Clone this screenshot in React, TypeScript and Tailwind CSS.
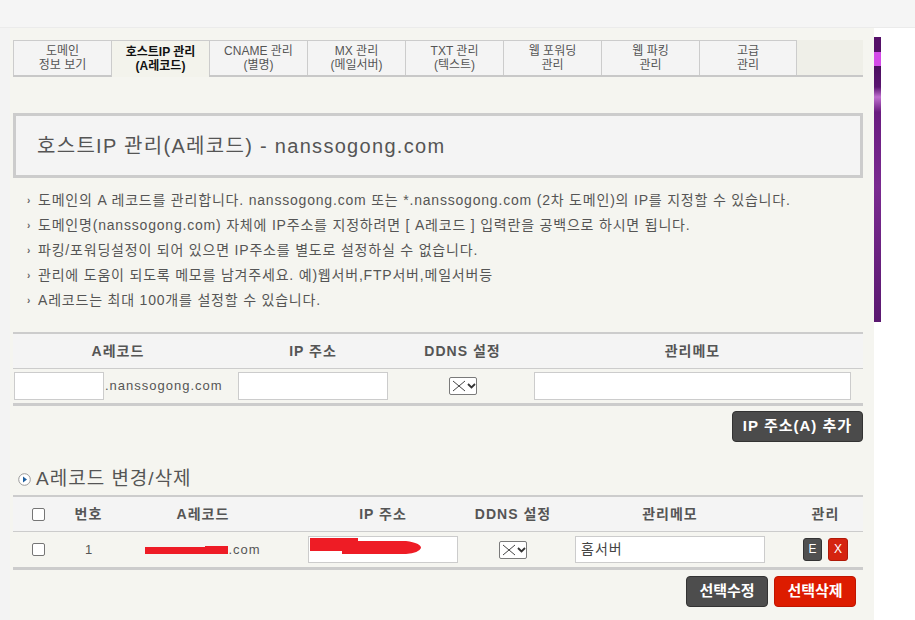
const tabs = [
  ['도메인', '정보 보기'],
  ['호스트IP 관리', '(A레코드)'],
  ['CNAME 관리', '(별명)'],
  ['MX 관리', '(메일서버)'],
  ['TXT 관리', '(텍스트)'],
  ['웹 포워딩', '관리'],
  ['웹 파킹', '관리'],
  ['고급', '관리'],
];

const notes = [
  '도메인의 A 레코드를 관리합니다. nanssogong.com 또는 *.nanssogong.com (2차 도메인)의 IP를 지정할 수 있습니다.',
  '도메인명(nanssogong.com) 자체에 IP주소를 지정하려면 [ A레코드 ] 입력란을 공백으로 하시면 됩니다.',
  '파킹/포워딩설정이 되어 있으면 IP주소를 별도로 설정하실 수 없습니다.',
  '관리에 도움이 되도록 메모를 남겨주세요. 예)웹서버,FTP서버,메일서버등',
  'A레코드는 최대 100개를 설정할 수 있습니다.',
];

function DdnsSelect() {
  return (
    <div className="inline-flex items-center w-[28px] h-[18px] border border-[#7a7a7a] rounded-[2px] bg-white pl-[2px]">
      <svg width="14" height="12" viewBox="0 0 14 12">
        <path d="M1 1 L13 11 M13 1 L1 11" stroke="#444" strokeWidth="1" fill="none" />
      </svg>
      <svg width="9" height="6" viewBox="0 0 9 6" className="ml-[1px]">
        <path d="M1 1 L4.5 4.5 L8 1" stroke="#333" strokeWidth="1.8" fill="none" />
      </svg>
    </div>
  );
}

function Check() {
  return <span className="inline-block w-[13px] h-[13px] border border-[#767676] rounded-[2px] bg-white" />;
}

export default function App() {
  return (
    <div className="w-[915px] h-[620px] overflow-hidden bg-white text-[#555] font-['Liberation_Sans','Noto_Sans_CJK_KR',sans-serif]">
      {/* top bar */}
      <div className="h-[28px] bg-[#f5f5f5] border-b border-[#ebebeb]" />

      <div className="flex h-[592px]">
        <div className="w-[10px] bg-[#f3f3f3]" />

        <div className="w-[864px] bg-[#f5f5f0] pl-[3px] pr-[11px] pt-[12px]">
          {/* tabs */}
          <div className="flex h-[37px] bg-[#efefe8] border-b-2 border-[#c8c8c8]">
            {tabs.map(([a, b], i) => (
              <div
                key={a}
                className={`w-[98px] flex flex-col justify-center items-center text-[12px] leading-[14px] border-t border-l border-[#cccccc] ${
                  i === 7 ? 'border-r' : ''
                } ${
                  i === 1
                    ? 'bg-[#f3f3ec] h-[37px] mb-[-2px] font-bold text-[#111]'
                    : 'bg-[#f4f4f4] text-[#555]'
                }`}
              >
                <span>{a}</span>
                <span>{b}</span>
              </div>
            ))}
          </div>

          {/* title */}
          <div className="mt-[36px] h-[65px] border-[3px] border-[#cccccc] bg-[#f4f4f4] flex items-center pl-[21px] text-[20px] tracking-[1.3px] text-[#555]">
            호스트IP 관리(A레코드) - nanssogong.com
          </div>

          {/* notes */}
          <ul className="mt-[10px] pl-[14px] text-[14px] tracking-[0.8px] leading-[25px] text-[#555]">
            {notes.map((n) => (
              <li key={n} className="flex items-center">
                <span className="w-[11px] text-[10px] text-[#666] font-bold">›</span>
                <span>{n}</span>
              </li>
            ))}
          </ul>

          {/* add form */}
          <div className="mt-[19px] border-t-2 border-b-[3px] border-[#cccccc]">
            <div className="grid grid-cols-[210px_180px_119px_341px] h-[35px] bg-[#f4f4f4] border-b border-[#cccccc] items-center text-center text-[14px] tracking-[1px] font-bold text-[#555]">
              <span>A레코드</span>
              <span>IP 주소</span>
              <span>DDNS 설정</span>
              <span>관리메모</span>
            </div>
            <div className="grid grid-cols-[210px_180px_119px_341px] h-[34px] items-center text-[13px]">
              <div className="flex items-center pl-[1px]">
                <div className="w-[90px] h-[28px] border border-[#cccccc] bg-white" />
                <span className="ml-[1px] tracking-[1px]">.nanssogong.com</span>
              </div>
              <div className="flex justify-center">
                <div className="w-[150px] h-[28px] border border-[#cccccc] bg-white" />
              </div>
              <div className="flex justify-center">
                <DdnsSelect />
              </div>
              <div className="flex justify-center">
                <div className="w-[317px] h-[28px] border border-[#cccccc] bg-white" />
              </div>
            </div>
          </div>

          <div className="flex justify-end mt-[5px]">
            <button className="w-[131px] h-[31px] bg-[#4b4b4b] border border-[#333] rounded-[4px] text-white text-[15px] tracking-[1px] font-bold">
              IP 주소(A) 추가
            </button>
          </div>

          {/* list */}
          <div className="mt-[26px] h-[22px] flex items-center pl-[5px] text-[19px] tracking-[1px] text-[#555]">
            <svg width="13" height="13" viewBox="0 0 13 13" className="mr-[5px]">
              <circle cx="6.5" cy="6.5" r="5.8" fill="#fff" stroke="#9a9a9a" strokeWidth="1" />
              <path d="M5 3.5 L9 6.5 L5 9.5 Z" fill="#1f5f9e" />
            </svg>
            A레코드 변경/삭제
          </div>

          <div className="mt-[5px] border-t-2 border-b-[3px] border-[#cccccc]">
            <div className="grid grid-cols-[50px_51px_178px_182px_78px_236px_75px] h-[35px] bg-[#f4f4f4] border-b border-[#cccccc] items-center text-center text-[14px] tracking-[1px] font-bold text-[#555]">
              <div className="flex justify-center">
                <Check />
              </div>
              <span>번호</span>
              <span>A레코드</span>
              <span>IP 주소</span>
              <span>DDNS 설정</span>
              <span>관리메모</span>
              <span>관리</span>
            </div>
            <div className="grid grid-cols-[50px_51px_178px_182px_78px_236px_75px] h-[35px] items-center text-center text-[13px]">
              <div className="flex justify-center">
                <Check />
              </div>
              <span>1</span>
              <div className="flex justify-center items-center">
                <svg width="83" height="10" viewBox="0 0 83 10">
                  <path d="M0 2 H60 V1 H83 V9 H0 Z" fill="#ee1c25" />
                </svg>
                <span className="tracking-[1px]">.com</span>
              </div>
              <div className="flex justify-center">
                <div className="relative w-[150px] h-[27px] border border-[#cccccc] bg-white">
                  <svg width="112" height="18" viewBox="0 0 112 18" className="absolute left-[1px] top-[1px]">
                    <path d="M0 0 H48 V3 H96 Q111 5 111 10 Q109 15 96 16 H32 V13 H0 Z" fill="#ee1c25" />
                  </svg>
                </div>
              </div>
              <div className="flex justify-center">
                <DdnsSelect />
              </div>
              <div className="flex justify-center">
                <div className="w-[190px] h-[27px] border border-[#cccccc] bg-white text-left pl-[5px] leading-[25px] text-[14px] tracking-[1px] text-[#444]">
                  홈서버
                </div>
              </div>
              <div className="flex justify-center gap-[6px]">
                <span className="w-[19px] h-[23px] bg-[#505050] border border-[#333] rounded-[3px] text-white text-[12px] leading-[21px]">
                  E
                </span>
                <span className="w-[20px] h-[23px] bg-[#d52410] border border-[#b01a08] rounded-[3px] text-white text-[12px] leading-[21px]">
                  X
                </span>
              </div>
            </div>
          </div>

          <div className="flex justify-end gap-[6px] mt-[6px] mr-[7px]">
            <button className="w-[82px] h-[31px] bg-[#4d4d4d] border border-[#333] rounded-[4px] text-white text-[15px] font-bold">
              선택수정
            </button>
            <button className="w-[82px] h-[31px] bg-[#dd1c00] border border-[#c01500] rounded-[4px] text-white text-[15px] font-bold">
              선택삭제
            </button>
          </div>
        </div>

        {/* side banner strip */}
        <div className="w-[7px] mt-[9px] h-[285px] bg-[linear-gradient(to_bottom,#551068_0px,#551068_15px,#d44ae8_15px,#d44ae8_29px,#4a0e5e_29px,#5a1470_50px,#c070d0_60px,#6a1c80_75px,#7a2a90_150px,#5a1870_285px)]" />
        <div className="flex-1 bg-white" />
      </div>
    </div>
  );
}
